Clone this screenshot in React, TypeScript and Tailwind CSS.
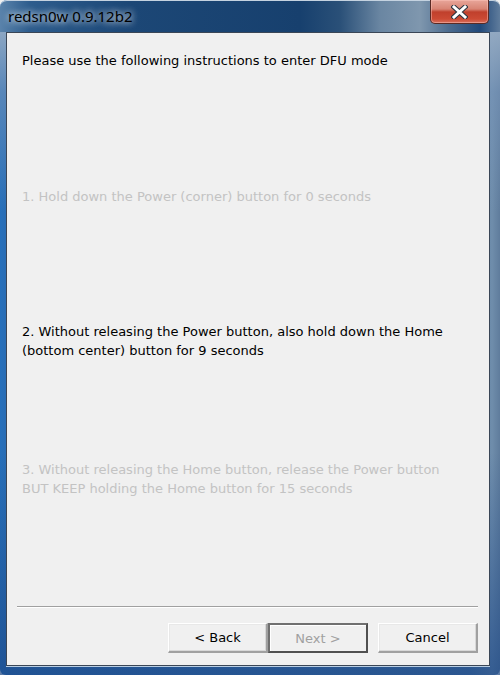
import React from 'react';

function CloseGlyph() {
    return (
        <svg width="17" height="14" viewBox="0 0 17 14">
            <path d="M3 2 L14 12 M14 2 L3 12" stroke="#2b3440" strokeWidth="5" strokeLinecap="square" />
            <path d="M3 2 L14 12 M14 2 L3 12" stroke="#ffffff" strokeWidth="3" strokeLinecap="square" />
        </svg>
    );
}

function WizardButton({ label, disabled, isDefault }: { label: string; disabled?: boolean; isDefault?: boolean }) {
    return (
        <button
            className={`w-[100px] h-[30px] bg-[#f0f0f0] leading-none ${disabled ? 'text-[#a0a0a0]' : 'text-black'} ${isDefault
                ? 'border-2 border-t-[#707070] border-l-[#707070] border-b-[#505050] border-r-[#505050] shadow-[inset_1px_1px_0_#ffffff]'
                : 'border-t border-l border-t-white border-l-white border-b-2 border-r-2 border-b-[#a0a0a0] border-r-[#a0a0a0] shadow-[inset_-1px_-1px_0_#d8d8d8,inset_1px_1px_0_#e8e8e8]'}`}
        >
            {label}
        </button>
    );
}

export default function App() {
    return (
        <div className="w-[500px] h-[675px] overflow-hidden bg-[#f0f0f0] font-['DejaVu_Sans',sans-serif]">
            <div className="w-[500px] h-[675px] rounded-t-[7px] rounded-b-[6px] relative flex flex-col bg-[linear-gradient(90deg,#2670bb_0px,#2a6cb2_8px,#4d77a3_470px,#6f8dab_492px,#5f7c9c_100%)]">
                {/* title bar */}
                <div className="h-[32px] shrink-0 rounded-t-[7px] border-t border-[#c4d2e0] bg-[linear-gradient(90deg,#5a83ab_0px,#2d5c8d_30px,#1c4776_130px,#17406e_300px,#2a5078_340px,#6a86a2_380px,#7f97ae_420px,#4a6a8e_450px,#22497a_480px,#5f7c9c_100%)] pl-[8px] pt-[3px] font-['Noto_Sans',sans-serif]">
                    <span className="text-[15px] text-black [text-shadow:0_0_6px_rgba(255,255,255,0.9),0_0_10px_rgba(255,255,255,0.6)]">redsn0w 0.9.12b2</span>
                </div>
                <div className="absolute top-0 right-[11px] w-[59px] h-[24px] rounded-b-[5px] border border-t-0 border-[#5a2a24] bg-[linear-gradient(180deg,#e8a69a_0px,#d88474_9px,#c0402c_12px,#cc4a34_19px,#d8705e_100%)] flex items-center justify-center shadow-[inset_0_0_0_1px_rgba(255,200,190,0.45)]">
                    <CloseGlyph />
                </div>

                {/* side + bottom frame, with content panel */}
                <div className="flex-1 flex pl-[6px] pr-[10px] pb-[9px] bg-[linear-gradient(180deg,rgba(150,172,196,0.9)_0px,rgba(120,150,186,0.6)_60px,rgba(40,100,170,0)_180px,rgba(30,80,150,0)_420px,rgba(28,72,135,0.7)_100%)]">
                    <div className="flex-1 h-[634px] border border-[#3a4656] bg-[#f0f0f0] flex flex-col pl-[15px] pr-[11px] text-[13px] leading-[19px] shadow-[0_1px_0_#b8cde2]">
                        <div className="mt-[18px] text-black">Please use the following instructions to enter DFU mode</div>
                        <div className="mt-[117px] text-[#c3c3c3]">1. Hold down the Power (corner) button for 0 seconds</div>
                        <div className="mt-[116px] text-black">
                            2. Without releasing the Power button, also hold down the Home
                            <br />
                            (bottom center) button for 9 seconds
                        </div>
                        <div className="mt-[100px] text-[#c3c3c3]">
                            3. Without releasing the Home button, release the Power button
                            <br />
                            BUT KEEP holding the Home button for 15 seconds
                        </div>
                        <div className="mt-[108px] -ml-[5px] h-[2px] border-t border-[#a0a0a0] border-b border-b-white" />
                        <div className="mt-[15px] flex justify-end">
                            <WizardButton label="< Back" />
                            <WizardButton label="Next >" disabled isDefault />
                            <div className="w-[10px]" />
                            <WizardButton label="Cancel" />
                        </div>
                    </div>
                </div>
            </div>
        </div>
    );
}
